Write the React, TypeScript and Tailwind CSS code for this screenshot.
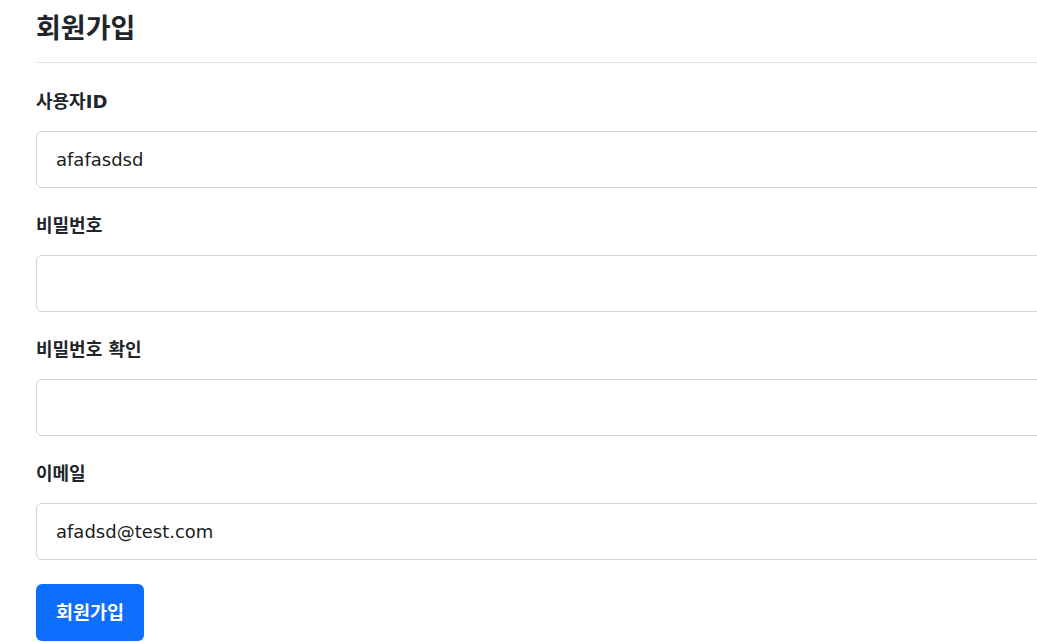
const fields = [
  { label: "사용자ID", value: "afafasdsd", type: "text" },
  { label: "비밀번호", value: "", type: "password" },
  { label: "비밀번호 확인", value: "", type: "password" },
  { label: "이메일", value: "afadsd@test.com", type: "email" },
];

const SignUp = () => {
  return (
    <div
      className="w-screen h-screen overflow-hidden bg-white text-[#212529]"
      style={{ fontFamily: '"DejaVu Sans", "Noto Sans CJK KR", sans-serif' }}
    >
      <div className="w-[1140px] pl-[36px] pt-[12px]">
        <div className="pb-[16px] border-b border-[#dee2e6]">
          <h2 className="text-[27px] leading-[34px] font-bold">회원가입</h2>
        </div>
        <form className="pt-[27px]" onSubmit={(e) => e.preventDefault()}>
          {fields.map((f) => (
            <div key={f.label} className="mb-[26px]">
              <label className="block text-[18px] leading-[24px] font-bold mb-[17px]">
                {f.label}
              </label>
              <input
                type={f.type}
                defaultValue={f.value}
                className="block w-full h-[57px] px-[19px] text-[18px] text-[#1a1d20] border border-[#ced4da] rounded-md outline-none"
              />
            </div>
          ))}
          <button
            type="submit"
            className="-mt-[2px] h-[57px] px-[20px] rounded-md bg-[#0d6efd] text-white text-[18.5px] font-bold"
          >
            회원가입
          </button>
        </form>
      </div>
    </div>
  );
};

export default function App() {
  return <SignUp />;
}
